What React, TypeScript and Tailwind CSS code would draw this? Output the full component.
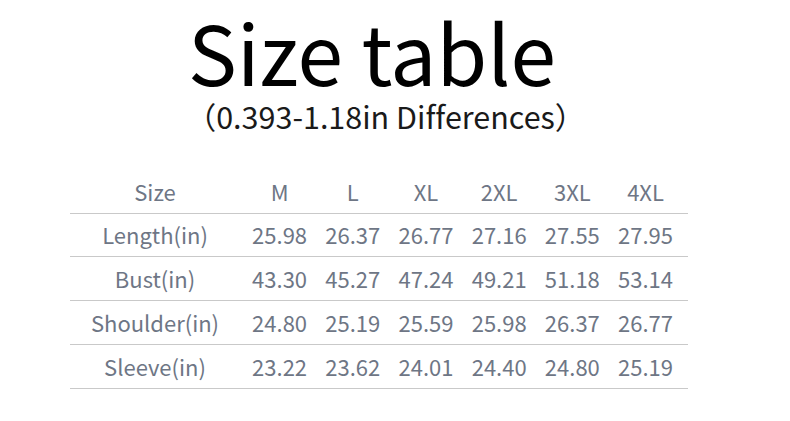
import React from "react";

const sizes = ["M", "L", "XL", "2XL", "3XL", "4XL"];
const rows: [string, string[]][] = [
  ["Length(in)", ["25.98", "26.37", "26.77", "27.16", "27.55", "27.95"]],
  ["Bust(in)", ["43.30", "45.27", "47.24", "49.21", "51.18", "53.14"]],
  ["Shoulder(in)", ["24.80", "25.19", "25.59", "25.98", "26.37", "26.77"]],
  ["Sleeve(in)", ["23.22", "23.62", "24.01", "24.40", "24.80", "25.19"]],
];

export default function App() {
  return (
    <div
      className="w-[790px] h-[421px] bg-white overflow-hidden [font-variant-ligatures:none]"
      style={{ fontFamily: '"Noto Sans CJK SC", "Noto Sans", sans-serif' }}
    >
      <div className="flex flex-col items-center">
        <div className="text-[82px] leading-[1.2] text-black mt-[2px] ml-[-46px]">Size table</div>
        <div className="text-[30.5px] leading-[1.2] text-[#1a1a1a] mt-[-2.4px] ml-[-19px]">（0.393-1.18in Differences）</div>
      </div>
      <div className="ml-[70px] mt-[35px] w-[618px] text-[22px] text-[#6e7685]">
        <div className="grid grid-cols-[173px_repeat(6,73.2px)] h-[44px] items-center border-b border-[#c9c9c9]">
          <div className="text-center pr-[3px]">Size</div>
          {sizes.map((s) => (
            <div key={s} className="text-center">{s}</div>
          ))}
        </div>
        {rows.map(([label, vals]) => (
          <div
            key={label}
            className="grid grid-cols-[173px_repeat(6,73.2px)] h-[43.75px] items-center border-b border-[#c9c9c9]"
          >
            <div className="text-center pr-[3px]">{label}</div>
            {vals.map((v, i) => (
              <div key={i} className="text-center">{v}</div>
            ))}
          </div>
        ))}
      </div>
    </div>
  );
}
